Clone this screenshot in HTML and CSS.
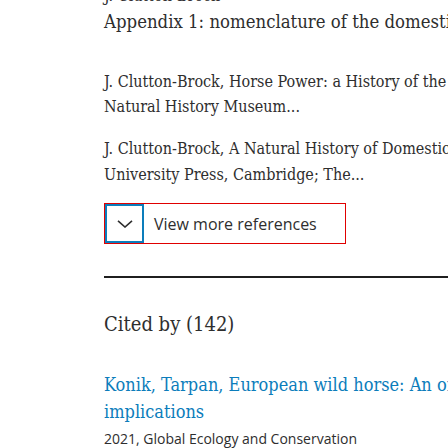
FILE: index.html
```html
<!DOCTYPE html>
<html>
<head>
<meta charset="utf-8">
<link rel="stylesheet" href="styles.css">
</head>
<body>
<div class="page">
  <ol class="refs">
    <li class="ref ref-first">
      <div class="ref-author">J. Clutton-Brock</div>
      <div class="ref-title">Appendix 1: nomenclature of the domestic horse</div>
    </li>
    <li class="ref ref-one">J. Clutton-Brock, Horse Power: a History of the Horse and the Donkey in Human Societies, Natural History Museum...</li>
    <li class="ref">J. Clutton-Brock, A Natural History of Domesticated Mammals (second ed.), Cambridge University Press, Cambridge; The...</li>
  </ol>
  <button class="more">
    <span class="more-icon">
      <svg width="16" height="8" viewBox="0 0 16 8"><path d="M1 0.8 L8 7 L15 0.8" fill="none" stroke="#2e2e2e" stroke-width="1.6"/></svg>
    </span>
    <span class="more-label">View more references</span>
  </button>
  <hr class="rule">
  <h2 class="cited">Cited by (142)</h2>
  <div class="citing">
    <a class="citing-title">Konik, Tarpan, European wild horse: An origin story with conservation implications</a>
    <div class="citing-meta">2021, Global Ecology and Conservation</div>
  </div>
</div>
</body>
</html>
```
FILE: styles.css
```css
html, body {
  margin: 0;
  padding: 0;
  overflow: hidden;
  background: #fff;
}
.page {
  margin-left: 104px;
  width: 672px;
  color: #2e2e2e;
  font-family: "DejaVu Serif", serif;
  font-stretch: condensed;
}
.refs {
  list-style: none;
  margin: 0;
  padding: 0;
}
.ref {
  font-size: 16px;
  line-height: 25.6px;
  margin-top: 16.5px;
}
.ref-first {
  margin-top: -16.5px;
}
.ref-one {
  margin-top: 33px;
}
.ref-author {
  line-height: 24px;
}
.ref-title {
  font-size: 18.4px;
  line-height: 28px;
  white-space: nowrap;
}
.more {
  display: flex;
  align-items: stretch;
  margin-top: 16px;
  padding: 0;
  width: 242px;
  height: 41px;
  border: 1px solid #e00000;
  background: #fff;
  cursor: pointer;
}
.more-icon {
  width: 39px;
  border: 2px solid #0c7dbb;
  box-sizing: border-box;
  display: flex;
  align-items: center;
  justify-content: center;
}
.more-label {
  display: flex;
  align-items: center;
  padding-left: 10px;
  font-family: "Open Sans", sans-serif;
  font-stretch: normal;
  font-size: 16px;
  color: #2e2e2e;
}
.rule {
  margin: 32px 0 0 0;
  border: 0;
  height: 2px;
  background: #1f1f1f;
}
.cited {
  margin: 31.8px 0 0 0;
  font-weight: normal;
  font-size: 20px;
  line-height: 28px;
}
.citing {
  margin-top: 33px;
}
.citing-title {
  display: block;
  font-size: 18px;
  line-height: 27.3px;
  color: #0c7dbb;
}
.citing-meta {
  margin-top: 2.2px;
  font-family: "Open Sans", sans-serif;
  font-stretch: normal;
  font-size: 14px;
  line-height: 22px;
  color: #2e2e2e;
}
```
